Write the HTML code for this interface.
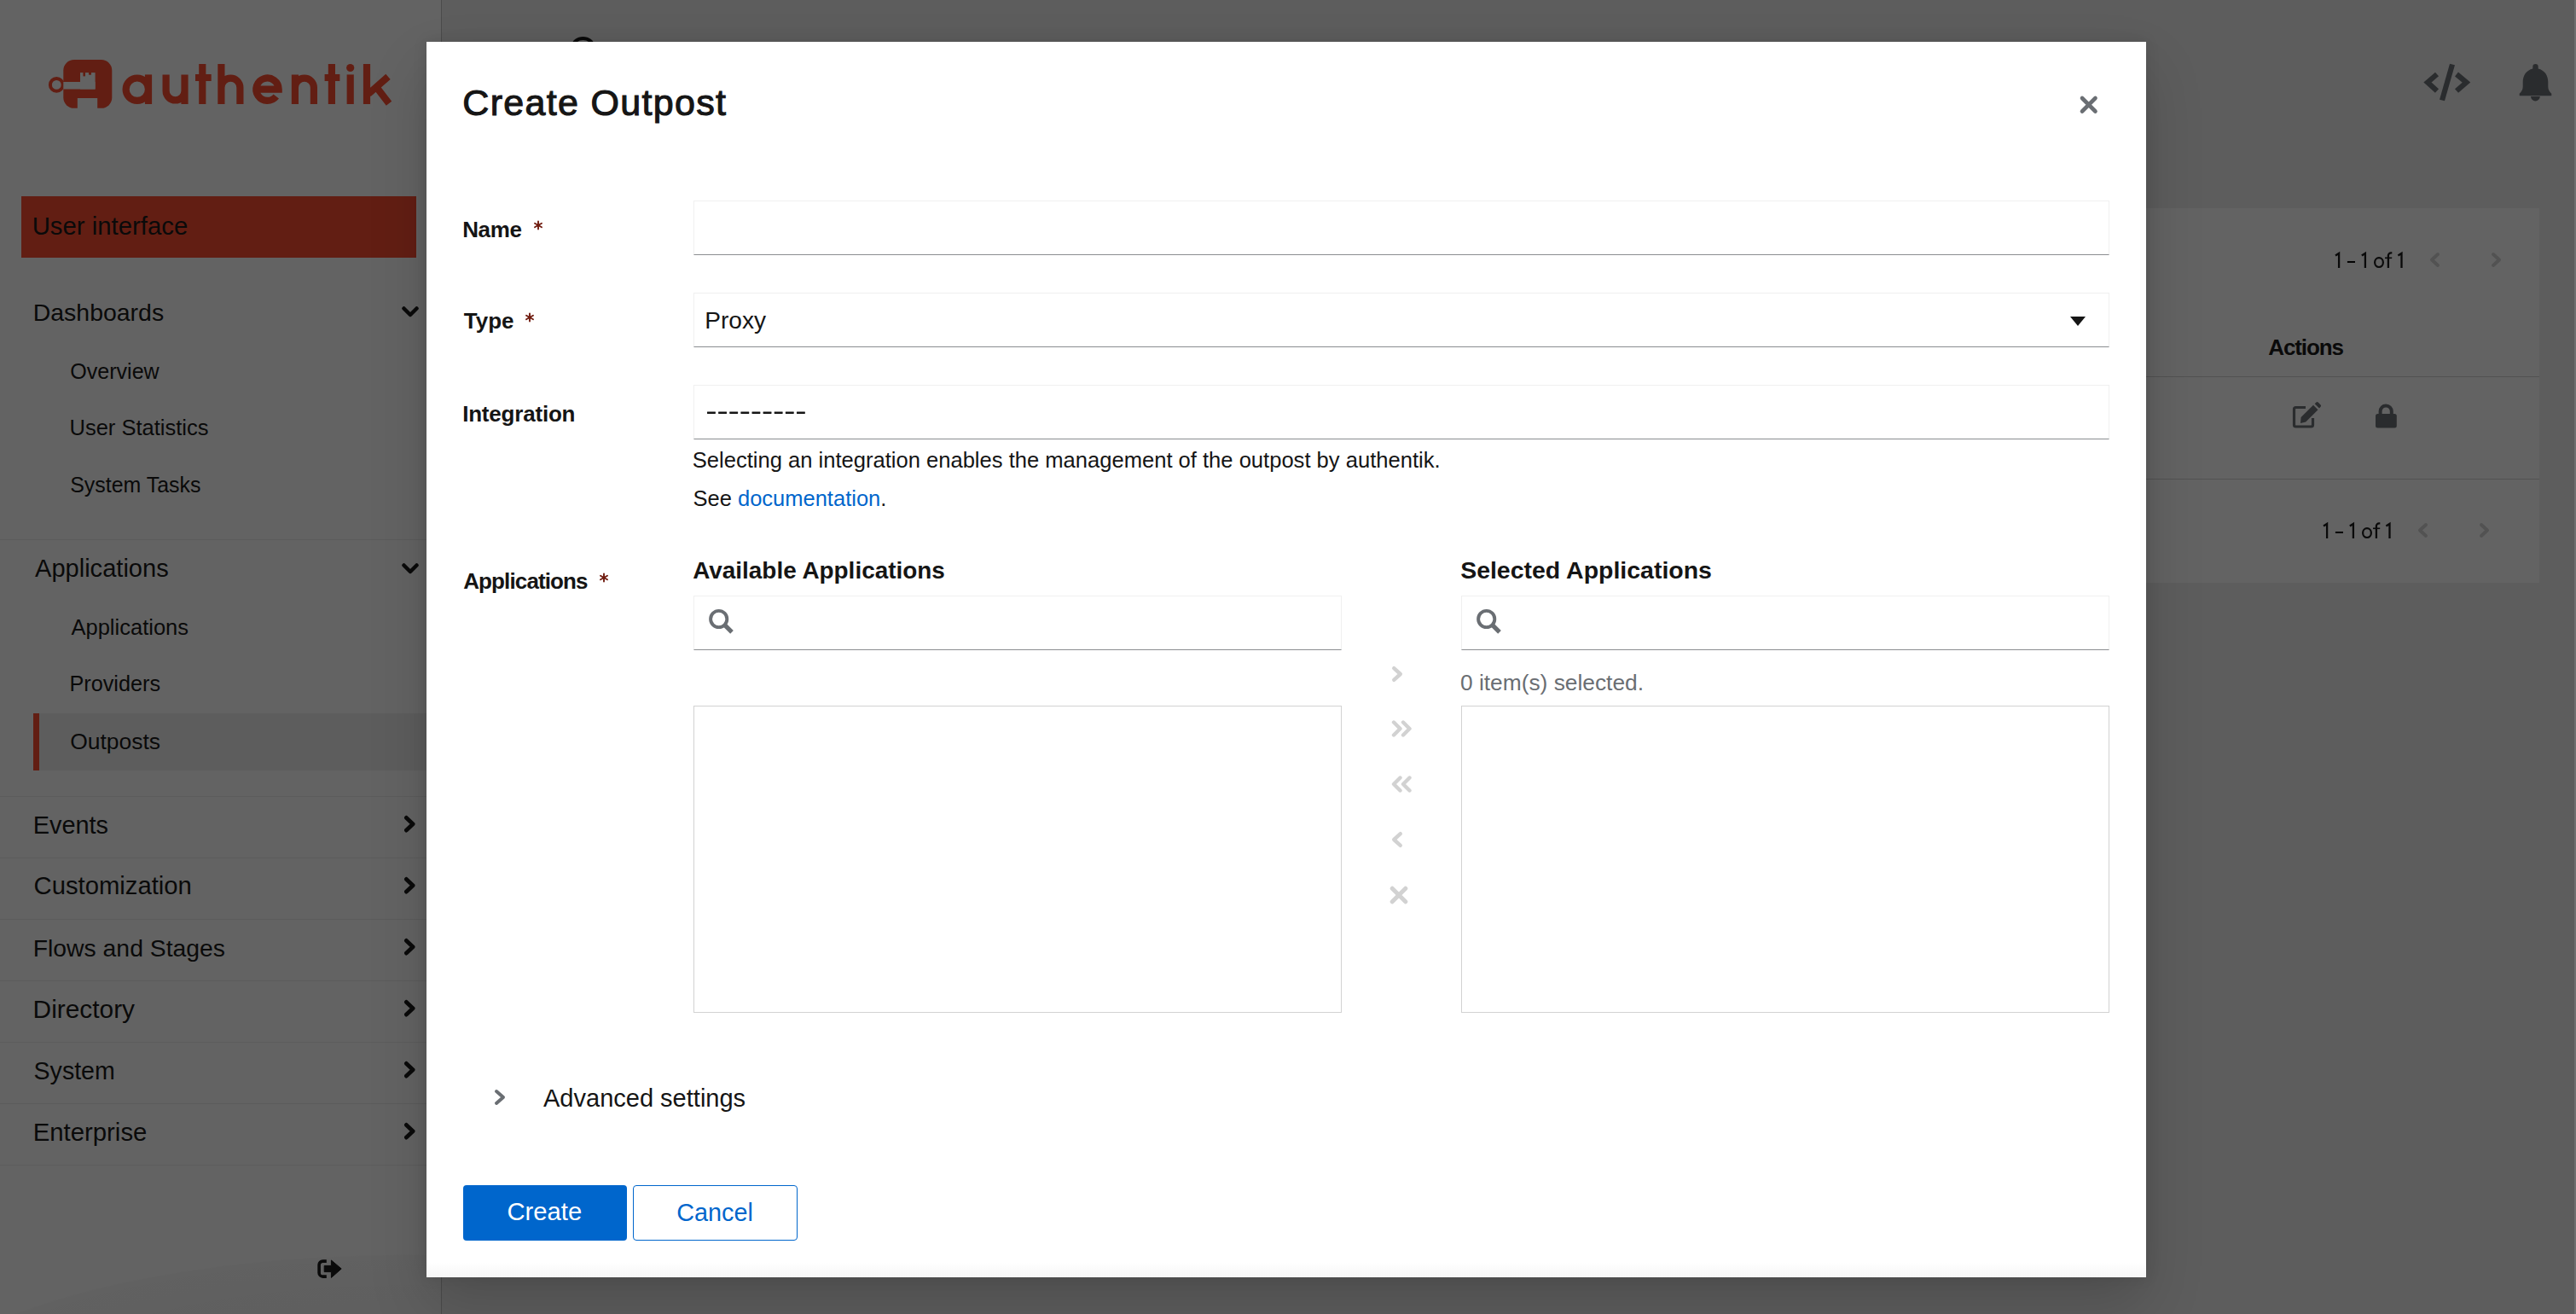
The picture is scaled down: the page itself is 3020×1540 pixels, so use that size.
<!DOCTYPE html>
<html><head><meta charset="utf-8"><style>
html,body{margin:0;padding:0;}
body{width:3020px;height:1540px;position:relative;overflow:hidden;background:#f0f0f0;font-family:"Liberation Sans",sans-serif;}
.t{position:absolute;white-space:nowrap;}
.r{position:absolute;}
#ov{position:absolute;left:0;top:0;width:3020px;height:1540px;background:rgba(3,3,3,0.62);}
#modal{position:absolute;left:500px;top:49px;width:2016px;height:1448px;background:#fff;box-shadow:0 32px 64px 0 rgba(3,3,3,.16),0 0 16px 0 rgba(3,3,3,.1);}
</style></head><body>
<div class="r" style="left:0px;top:0px;width:517px;height:1540px;background:#fff;border-right:1px solid #c0c0c0;"></div>
<svg class="r" style="left:0px;top:0px" width="520" height="140" viewBox="0 0 520 140">
<g fill="#fd4b2d"><rect x="74.3" y="70" width="57" height="56.8" rx="12.5"/></g>
<circle cx="66.3" cy="99.4" r="7.4" fill="none" stroke="#fd4b2d" stroke-width="4"/>
<g fill="#fff">
<rect x="74.3" y="96" width="37.3" height="8.5"/>
<rect x="94" y="85.1" width="17.6" height="19.4"/>
<rect x="90.8" y="115" width="23.4" height="12"/>
</g>
<g fill="#fd4b2d"><rect x="97.4" y="85" width="2.6" height="4.4"/><rect x="104" y="85" width="3" height="2.7"/></g>
<g fill="none" stroke="#fd4b2d" stroke-width="8.2">
<circle cx="160.8" cy="104.7" r="13.2"/>
<path d="M174 87.4 V122"/>
<path d="M194.6 87.4 V106.5 a10.95 10.95 0 0 0 21.9 0 V87.4 M216.5 100 V122"/>
<path d="M237.3 75 V122 M229 91 H247.7"/>
<path d="M259.4 75 V122 M259.4 122 V102.7 a11 11 0 0 1 22 0 V122"/>
<path d="M300.3 104.7 H326.7 A13.2 13.2 0 1 0 323.8 113"/>
<path d="M345.9 87.4 V122 M345.9 122 V102.7 a11 11 0 0 1 22 0 V122"/>
<path d="M388.9 75 V122 M380.6 91 H398.4"/>
<path d="M410.7 87.4 V122"/>
<path d="M430 75 V122 M432 110 L455 89.8 M440.5 101 L456 121.2"/>
</g>
<circle cx="410.7" cy="79.5" r="4.6" fill="#fd4b2d"/>
</svg>
<div class="r" style="left:25px;top:230px;width:463px;height:72px;background:#fd4b2d;"></div>
<div class="t" style="left:37.65px;top:250.15px;font-size:29.34px;line-height:29.34px;color:#151515;">User interface</div>
<div class="t" style="left:38.72px;top:351.90px;font-size:28.46px;line-height:28.46px;color:#151515;">Dashboards</div>
<div class="t" style="left:82.25px;top:422.57px;font-size:25.07px;line-height:25.07px;color:#151515;">Overview</div>
<div class="t" style="left:81.46px;top:489.19px;font-size:25.52px;line-height:25.52px;color:#151515;">User Statistics</div>
<div class="t" style="left:82.25px;top:555.70px;font-size:24.92px;line-height:24.92px;color:#151515;">System Tasks</div>
<div class="r" style="left:0px;top:632px;width:516px;height:1px;background:#ececec;"></div>
<div class="t" style="left:41.00px;top:651.99px;font-size:29.07px;line-height:29.07px;color:#151515;">Applications</div>
<div class="t" style="left:83.50px;top:723.40px;font-size:25.51px;line-height:25.51px;color:#151515;">Applications</div>
<div class="t" style="left:81.48px;top:789.23px;font-size:25.24px;line-height:25.24px;color:#151515;">Providers</div>
<div class="r" style="left:39px;top:836px;width:477px;height:67px;background:#f0f0f0;"></div>
<div class="r" style="left:39px;top:836px;width:7px;height:67px;background:#fd4b2d;"></div>
<div class="t" style="left:82.18px;top:855.59px;font-size:26.47px;line-height:26.47px;color:#151515;">Outposts</div>
<div class="r" style="left:0px;top:933px;width:516px;height:1px;background:#ececec;"></div>
<div class="t" style="left:38.69px;top:952.52px;font-size:28.91px;line-height:28.91px;color:#151515;">Events</div>
<div class="r" style="left:0px;top:1005px;width:516px;height:1px;background:#ececec;"></div>
<div class="t" style="left:39.54px;top:1024.23px;font-size:29.26px;line-height:29.26px;color:#151515;">Customization</div>
<div class="r" style="left:0px;top:1077px;width:516px;height:1px;background:#ececec;"></div>
<div class="t" style="left:38.73px;top:1096.99px;font-size:28.35px;line-height:28.35px;color:#151515;">Flows and Stages</div>
<div class="r" style="left:0px;top:1149px;width:516px;height:1px;background:#ececec;"></div>
<div class="t" style="left:38.61px;top:1167.73px;font-size:29.85px;line-height:29.85px;color:#151515;">Directory</div>
<div class="r" style="left:0px;top:1221px;width:516px;height:1px;background:#ececec;"></div>
<div class="t" style="left:39.57px;top:1240.81px;font-size:28.57px;line-height:28.57px;color:#151515;">System</div>
<div class="r" style="left:0px;top:1293px;width:516px;height:1px;background:#ececec;"></div>
<div class="t" style="left:38.65px;top:1312.15px;font-size:29.35px;line-height:29.35px;color:#151515;">Enterprise</div>
<div class="r" style="left:0px;top:1365px;width:516px;height:1px;background:#ececec;"></div>
<svg class="r" style="left:470.5px;top:358.6px" width="20" height="14" viewBox="0 0 20 14"><path d="M2.5 2.5 L10 10 L17.5 2.5" fill="none" stroke="#151515" stroke-width="4.5" stroke-linecap="round" stroke-linejoin="round"/></svg>
<svg class="r" style="left:470.5px;top:659.6px" width="20" height="14" viewBox="0 0 20 14"><path d="M2.5 2.5 L10 10 L17.5 2.5" fill="none" stroke="#151515" stroke-width="4.5" stroke-linecap="round" stroke-linejoin="round"/></svg>
<svg class="r" style="left:472.6px;top:954.5px" width="14.5" height="21.5" viewBox="0 0 14.5 21.5"><path d="M3.4000000000000004 3.4000000000000004 L11.1 10.75 L3.4000000000000004 18.1" fill="none" stroke="#151515" stroke-width="4.8" stroke-linecap="round" stroke-linejoin="round"/></svg>
<svg class="r" style="left:472.6px;top:1026.5px" width="14.5" height="21.5" viewBox="0 0 14.5 21.5"><path d="M3.4000000000000004 3.4000000000000004 L11.1 10.75 L3.4000000000000004 18.1" fill="none" stroke="#151515" stroke-width="4.8" stroke-linecap="round" stroke-linejoin="round"/></svg>
<svg class="r" style="left:472.6px;top:1098.5px" width="14.5" height="21.5" viewBox="0 0 14.5 21.5"><path d="M3.4000000000000004 3.4000000000000004 L11.1 10.75 L3.4000000000000004 18.1" fill="none" stroke="#151515" stroke-width="4.8" stroke-linecap="round" stroke-linejoin="round"/></svg>
<svg class="r" style="left:472.6px;top:1170.5px" width="14.5" height="21.5" viewBox="0 0 14.5 21.5"><path d="M3.4000000000000004 3.4000000000000004 L11.1 10.75 L3.4000000000000004 18.1" fill="none" stroke="#151515" stroke-width="4.8" stroke-linecap="round" stroke-linejoin="round"/></svg>
<svg class="r" style="left:472.6px;top:1242.5px" width="14.5" height="21.5" viewBox="0 0 14.5 21.5"><path d="M3.4000000000000004 3.4000000000000004 L11.1 10.75 L3.4000000000000004 18.1" fill="none" stroke="#151515" stroke-width="4.8" stroke-linecap="round" stroke-linejoin="round"/></svg>
<svg class="r" style="left:472.6px;top:1314.5px" width="14.5" height="21.5" viewBox="0 0 14.5 21.5"><path d="M3.4000000000000004 3.4000000000000004 L11.1 10.75 L3.4000000000000004 18.1" fill="none" stroke="#151515" stroke-width="4.8" stroke-linecap="round" stroke-linejoin="round"/></svg>
<svg class="r" style="left:372px;top:1476px" width="30" height="23" viewBox="0 0 30 23"><path d="M10.8 2.1 H6.5 a4.4 4.4 0 0 0 -4.4 4.4 V15.7 a4.4 4.4 0 0 0 4.4 4.4 H10.8" fill="none" stroke="#151515" stroke-width="3.6"/><path d="M8.2 7.4 H16.4 V1 L28.2 11 L16.4 21.4 V14.6 H8.2 Z" fill="#151515" stroke="#151515" stroke-width="1" stroke-linejoin="round"/></svg>
<svg class="r" style="left:2830px;top:60px" width="180" height="70" viewBox="0 0 180 70">
<g fill="none" stroke="#6a6e73" stroke-width="6.2" stroke-linejoin="miter" stroke-linecap="butt">
<path d="M2857 87 L2846 96.5 L2857 106.5" transform="translate(-2830,-60)"/>
<path d="M2880 87 L2891.5 96.5 L2880 106.5" transform="translate(-2830,-60)"/>
<path d="M2875 75.5 L2863 117.5" transform="translate(-2830,-60)"/>
</g>
<g fill="#6a6e73" transform="translate(-2830,-60)">
<path d="M2972.5 75 a3.2 3.2 0 0 1 3.2 3.2 v2.3 c7.5 1.8 11.6 8 11.6 15.5 v5.5 c0 3.5 1.5 6 4 8.2 v2.6 h-37.6 v-2.6 c2.5 -2.2 4 -4.7 4 -8.2 v-5.5 c0 -7.5 4.1 -13.7 11.6 -15.5 v-2.3 a3.2 3.2 0 0 1 3.2 -3.2 z"/>
<path d="M2967 113 h10.8 a5.4 5.4 0 0 1 -10.8 0 z"/>
</g></svg>
<svg class="r" style="left:667px;top:43px" width="32" height="10" viewBox="0 0 32 10"><path d="M5 11 a11.5 9 0 0 1 23 0" fill="none" stroke="#151515" stroke-width="4"/></svg>
<div class="r" style="left:565px;top:244px;width:2412px;height:439px;background:#fff;"></div>
<svg class="r" style="left:2733px;top:290px" width="90" height="28" viewBox="0 0 90 28"><g fill="none" stroke="#151515" stroke-width="2.3"><path d="M5 9.4 L9.1 6.9 V24.1"/><path d="M35.8 9.4 L39.9 6.9 V24.1"/><path d="M78.4 9.4 L82.5 6.9 V24.1"/><ellipse cx="56" cy="17.6" rx="4.9" ry="5.4" stroke-width="2.2"/><path d="M66.9 24.1 V9.6 a3.3 3.3 0 0 1 3.3 -3.3 H71.3"/><path d="M63 12.3 H71.2" stroke-width="1.6"/></g><rect x="18.9" y="16" width="9.1" height="2" fill="{TXT}"/></svg>
<svg class="r" style="left:2848px;top:295px" width="13" height="19" viewBox="0 0 13 19"><path d="M10.0 3.0 L3.0 9.5 L10.0 16.0" fill="none" stroke="#d2d2d2" stroke-width="4" stroke-linecap="round" stroke-linejoin="round"/></svg>
<svg class="r" style="left:2920px;top:295px" width="13" height="19" viewBox="0 0 13 19"><path d="M3.0 3.0 L10.0 9.5 L3.0 16.0" fill="none" stroke="#d2d2d2" stroke-width="4" stroke-linecap="round" stroke-linejoin="round"/></svg>
<div class="r" style="left:565px;top:441px;width:2412px;height:1px;background:#d2d2d2;"></div>
<div class="t" style="left:2659.22px;top:393.99px;font-size:26.00px;line-height:26.00px;color:#151515;font-weight:700;letter-spacing:-1.100px;">Actions</div>
<div class="r" style="left:565px;top:561px;width:2412px;height:1px;background:#d2d2d2;"></div>
<svg class="r" style="left:2680px;top:465px" width="45" height="42" viewBox="0 0 45 42"><g transform="translate(-2680,-465)">
<path d="M2703 477.5 H2691.5 a2 2 0 0 0 -2 2 V498 a2 2 0 0 0 2 2 H2709.5 a2 2 0 0 0 2 -2 V490" fill="none" stroke="#6a6e73" stroke-width="3.2"/>
<path d="M2697 496 L2697.6 489 L2712 474.8 L2717.5 480.3 L2703.2 494.6 Z" fill="#6a6e73"/>
<path d="M2713.7 473.2 L2715.5 471.6 a1.6 1.6 0 0 1 2.2 0 L2720.6 474.6 a1.6 1.6 0 0 1 0 2.2 L2719 478.5 Z" fill="#6a6e73"/>
</g></svg>
<svg class="r" style="left:2780px;top:465px" width="35" height="42" viewBox="0 0 35 42"><g transform="translate(-2780,-465)">
<path d="M2790.6 486 V482 a6.6 6.6 0 0 1 13.2 0 V486" fill="none" stroke="#6a6e73" stroke-width="4"/>
<rect x="2785" y="485" width="24.8" height="16.6" rx="2.5" fill="#6a6e73"/>
</g></svg>
<svg class="r" style="left:2718.6px;top:606.8px" width="90" height="28" viewBox="0 0 90 28"><g fill="none" stroke="#151515" stroke-width="2.3"><path d="M5 9.4 L9.1 6.9 V24.1"/><path d="M35.8 9.4 L39.9 6.9 V24.1"/><path d="M78.4 9.4 L82.5 6.9 V24.1"/><ellipse cx="56" cy="17.6" rx="4.9" ry="5.4" stroke-width="2.2"/><path d="M66.9 24.1 V9.6 a3.3 3.3 0 0 1 3.3 -3.3 H71.3"/><path d="M63 12.3 H71.2" stroke-width="1.6"/></g><rect x="18.9" y="16" width="9.1" height="2" fill="{TXT}"/></svg>
<svg class="r" style="left:2833.5px;top:612px" width="13" height="19" viewBox="0 0 13 19"><path d="M10.0 3.0 L3.0 9.5 L10.0 16.0" fill="none" stroke="#d2d2d2" stroke-width="4" stroke-linecap="round" stroke-linejoin="round"/></svg>
<svg class="r" style="left:2905.5px;top:612px" width="13" height="19" viewBox="0 0 13 19"><path d="M3.0 3.0 L10.0 9.5 L3.0 16.0" fill="none" stroke="#d2d2d2" stroke-width="4" stroke-linecap="round" stroke-linejoin="round"/></svg>
<div id="ov"></div>
<div class="r" style="left:0;top:1440px;width:517px;height:100px;background:radial-gradient(ellipse 600px 190px at 480px 220px, rgba(3,3,3,.075) 0%, rgba(3,3,3,.04) 75%, rgba(3,3,3,.025) 99%, rgba(3,3,3,0) 100%);"></div>
<div id="modal"><div style="position:absolute;left:0;bottom:0;width:100%;height:18px;background:linear-gradient(rgba(3,3,3,0),rgba(3,3,3,.035));"></div></div>
<div class="r" style="left:3018px;top:0;width:2px;height:1540px;background:#6f6f6f;"></div>
<div class="t" style="left:542.35px;top:99.19px;font-size:43.00px;line-height:43.00px;color:#151515;letter-spacing:1.311px;-webkit-text-stroke:1.1px #151515;">Create Outpost</div>
<svg class="r" style="left:2437px;top:111px" width="24" height="24" viewBox="0 0 24 24"><path d="M4 4 L19.5 19.5 M19.5 4 L4 19.5" stroke="#6a6e73" stroke-width="4.6" stroke-linecap="round"/></svg>
<div class="t" style="left:542.18px;top:255.59px;font-size:26.00px;line-height:26.00px;color:#151515;font-weight:700;letter-spacing:-0.373px;">Name</div>
<svg class="r" style="left:625.3px;top:258px" width="12" height="12" viewBox="0 0 12 12"><g stroke="#701c10" stroke-width="1.9" stroke-linecap="round"><path d="M6 1.5 V10.5"/><path d="M2 3.7 L10 8.3"/><path d="M10 3.7 L2 8.3"/></g></svg>
<div class="r" style="left:813px;top:235px;width:1660px;height:64px;background:#fff;border:1px solid #f0f0f0;border-bottom-color:#8a8d90;box-sizing:border-box;"></div>
<div class="t" style="left:543.74px;top:362.69px;font-size:26.00px;line-height:26.00px;color:#151515;font-weight:700;letter-spacing:0.013px;">Type</div>
<svg class="r" style="left:615.2px;top:366px" width="12" height="12" viewBox="0 0 12 12"><g stroke="#701c10" stroke-width="1.9" stroke-linecap="round"><path d="M6 1.5 V10.5"/><path d="M2 3.7 L10 8.3"/><path d="M10 3.7 L2 8.3"/></g></svg>
<div class="r" style="left:813px;top:343px;width:1660px;height:64px;background:#fff;border:1px solid #f0f0f0;border-bottom-color:#8a8d90;box-sizing:border-box;"></div>
<div class="t" style="left:826.25px;top:361.50px;font-size:28.10px;line-height:28.10px;color:#151515;">Proxy</div>
<svg class="r" style="left:2426px;top:370px" width="20" height="13" viewBox="0 0 20 13"><path d="M1 1 H19 L10 12 Z" fill="#151515"/></svg>
<div class="t" style="left:542.18px;top:472.29px;font-size:26.00px;line-height:26.00px;color:#151515;font-weight:700;letter-spacing:-0.204px;">Integration</div>
<div class="r" style="left:813px;top:451px;width:1660px;height:64px;background:#fff;border:1px solid #f0f0f0;border-bottom-color:#8a8d90;box-sizing:border-box;"></div>
<svg class="r" style="left:828px;top:480px" width="120" height="8" viewBox="0 0 120 8"><rect x="1.00" y="2.4" width="9.9" height="2.5" rx="0.4" fill="#151515"/><rect x="14.12" y="2.4" width="9.9" height="2.5" rx="0.4" fill="#151515"/><rect x="27.24" y="2.4" width="9.9" height="2.5" rx="0.4" fill="#151515"/><rect x="40.36" y="2.4" width="9.9" height="2.5" rx="0.4" fill="#151515"/><rect x="53.48" y="2.4" width="9.9" height="2.5" rx="0.4" fill="#151515"/><rect x="66.60" y="2.4" width="9.9" height="2.5" rx="0.4" fill="#151515"/><rect x="79.72" y="2.4" width="9.9" height="2.5" rx="0.4" fill="#151515"/><rect x="92.84" y="2.4" width="9.9" height="2.5" rx="0.4" fill="#151515"/><rect x="105.96" y="2.4" width="9.9" height="2.5" rx="0.4" fill="#151515"/></svg>
<div class="t" style="left:811.72px;top:527.05px;font-size:25.57px;line-height:25.57px;color:#151515;">Selecting an integration enables the management of the outpost by authentik.</div>
<div class="t" style="left:812.50px;top:572.11px;font-size:25.5px;line-height:25.5px;color:#151515;">See <span style="color:#06c">documentation</span>.</div>
<div class="t" style="left:543.22px;top:667.99px;font-size:26.00px;line-height:26.00px;color:#151515;font-weight:700;letter-spacing:-0.880px;">Applications</div>
<svg class="r" style="left:702px;top:671px" width="12" height="12" viewBox="0 0 12 12"><g stroke="#701c10" stroke-width="1.9" stroke-linecap="round"><path d="M6 1.5 V10.5"/><path d="M2 3.7 L10 8.3"/><path d="M10 3.7 L2 8.3"/></g></svg>
<div class="t" style="left:812.16px;top:655.36px;font-size:27.92px;line-height:27.92px;color:#151515;font-weight:700;">Available Applications</div>
<div class="t" style="left:1712.15px;top:653.89px;font-size:28.47px;line-height:28.47px;color:#151515;font-weight:700;">Selected Applications</div>
<div class="r" style="left:813px;top:698px;width:760px;height:64px;background:#fff;border:1px solid #f0f0f0;border-bottom-color:#8a8d90;box-sizing:border-box;"></div>
<svg class="r" style="left:830px;top:713px" width="32" height="32" viewBox="0 0 32 32"><circle cx="12.7" cy="12.5" r="9.6" fill="none" stroke="#6a6e73" stroke-width="3.9"/><path d="M19 18.8 L28 27.8" stroke="#6a6e73" stroke-width="5.2" stroke-linecap="butt"/></svg>
<div class="r" style="left:1713px;top:698px;width:760px;height:64px;background:#fff;border:1px solid #f0f0f0;border-bottom-color:#8a8d90;box-sizing:border-box;"></div>
<svg class="r" style="left:1730px;top:713px" width="32" height="32" viewBox="0 0 32 32"><circle cx="12.7" cy="12.5" r="9.6" fill="none" stroke="#6a6e73" stroke-width="3.9"/><path d="M19 18.8 L28 27.8" stroke="#6a6e73" stroke-width="5.2" stroke-linecap="butt"/></svg>
<div class="t" style="left:1711.95px;top:786.71px;font-size:26.33px;line-height:26.33px;color:#6a6e73;">0 item(s) selected.</div>
<div class="r" style="left:813px;top:827px;width:760px;height:360px;border:1px solid #d2d2d2;box-sizing:border-box;"></div>
<div class="r" style="left:1713px;top:827px;width:760px;height:360px;border:1px solid #d2d2d2;box-sizing:border-box;"></div>
<svg class="r" style="left:1631px;top:780px" width="14" height="20" viewBox="0 0 14 20"><path d="M3.2 3.2 L10.8 10.0 L3.2 16.8" fill="none" stroke="#d2d2d2" stroke-width="4.4" stroke-linecap="round" stroke-linejoin="round"/></svg>
<svg class="r" style="left:1631px;top:844px" width="26" height="20" viewBox="0 0 26 20"><path d="M3 2.5 L10.5 10 L3 17.5 M14 2.5 L21.5 10 L14 17.5" fill="none" stroke="#d2d2d2" stroke-width="4.4" stroke-linecap="round" stroke-linejoin="round"/></svg>
<svg class="r" style="left:1631px;top:909px" width="26" height="20" viewBox="0 0 26 20"><path d="M10.5 2.5 L3 10 L10.5 17.5 M21.5 2.5 L14 10 L21.5 17.5" fill="none" stroke="#d2d2d2" stroke-width="4.4" stroke-linecap="round" stroke-linejoin="round"/></svg>
<svg class="r" style="left:1631px;top:974px" width="14" height="20" viewBox="0 0 14 20"><path d="M10.8 3.2 L3.2 10.0 L10.8 16.8" fill="none" stroke="#d2d2d2" stroke-width="4.4" stroke-linecap="round" stroke-linejoin="round"/></svg>
<svg class="r" style="left:1629px;top:1038px" width="22" height="22" viewBox="0 0 22 22"><path d="M3.2 3.2 L18.8 18.8 M18.8 3.2 L3.2 18.8" stroke="#d2d2d2" stroke-width="5" stroke-linecap="round"/></svg>
<svg class="r" style="left:579px;top:1276px" width="14" height="20" viewBox="0 0 14 20"><path d="M3.0 3.0 L11.0 10.0 L3.0 17.0" fill="none" stroke="#6a6e73" stroke-width="4" stroke-linecap="round" stroke-linejoin="round"/></svg>
<div class="t" style="left:637.00px;top:1272.92px;font-size:29.03px;line-height:29.03px;color:#151515;">Advanced settings</div>
<div class="r" style="left:543px;top:1389px;width:192px;height:65px;background:#06c;border-radius:4px;"></div>
<div class="t" style="left:594.54px;top:1406.27px;font-size:29.21px;line-height:29.21px;color:#fff;">Create</div>
<div class="r" style="left:742px;top:1389px;width:193px;height:65px;border:1px solid #06c;border-radius:4px;box-sizing:border-box;"></div>
<div class="t" style="left:793.26px;top:1406.64px;font-size:28.77px;line-height:28.77px;color:#06c;">Cancel</div>
</body></html>
